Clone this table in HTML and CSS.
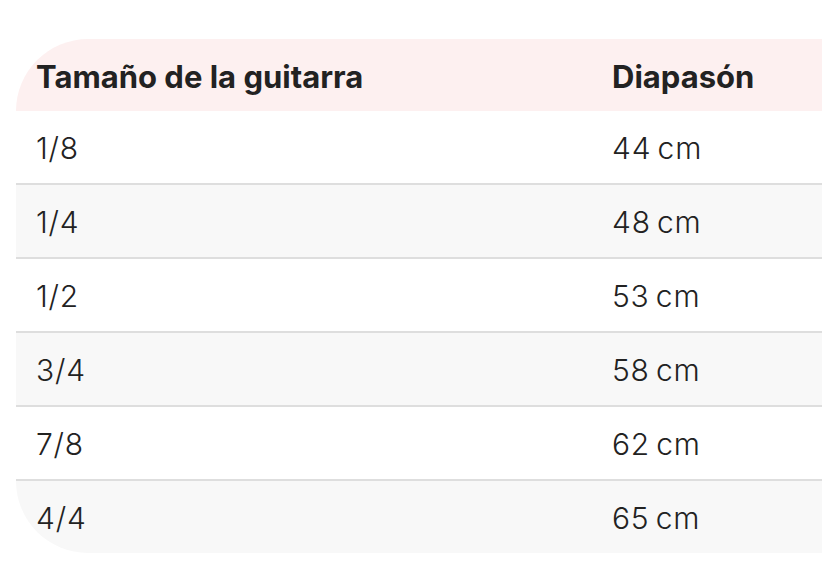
FILE: index.html
```html
<!DOCTYPE html>
<html lang="es">
<head>
<meta charset="utf-8">
<link rel="stylesheet" href="styles.css">
</head>
<body>
<table class="sizes">
  <thead>
    <tr><th class="c1">Tamaño de la guitarra</th><th class="c2">Diapasón</th></tr>
  </thead>
  <tbody>
    <tr><td class="c1">1/8</td><td class="c2">44 cm</td></tr>
    <tr><td class="c1">1/4</td><td class="c2">48 cm</td></tr>
    <tr><td class="c1">1/2</td><td class="c2">53 cm</td></tr>
    <tr><td class="c1">3/4</td><td class="c2">58 cm</td></tr>
    <tr><td class="c1">7/8</td><td class="c2">62 cm</td></tr>
    <tr><td class="c1">4/4</td><td class="c2">65 cm</td></tr>
  </tbody>
</table>
</body>
</html>
```
FILE: styles.css
```css
html, body {
  margin: 0;
  background: #ffffff;
  overflow: hidden;
}
body {
  padding: 39px 0 0 16px;
  font-family: Inter, "Noto Sans", sans-serif;
  color: #222222;
}
.sizes {
  border-collapse: separate;
  border-spacing: 0;
  width: 830px;
  table-layout: fixed;
}
.sizes th, .sizes td {
  height: 72px;
  padding: 0 0 0 20px;
  text-align: left;
  box-sizing: border-box;
  line-height: 1;
}
.sizes .c1 { width: 576px; }
.sizes th {
  background: #fdf0f0;
  font-weight: 650;
  font-size: 31px;
  letter-spacing: 0;
  padding-top: 2px;
}
.sizes th.c1 { border-top-left-radius: 72px; }
.sizes td {
  font-weight: 300;
  font-size: 30px;
  letter-spacing: 0.8px;
  word-spacing: -3px;
  background: #ffffff;
  padding-top: 2px;
}
.sizes tbody tr:nth-child(even) td { background: #f8f8f8; }
.sizes tbody tr:not(:last-child) td {
  border-bottom: 2px solid #dedede;
  height: 74px;
}
.sizes tbody tr:last-child td.c1 { border-bottom-left-radius: 72px; }
```
